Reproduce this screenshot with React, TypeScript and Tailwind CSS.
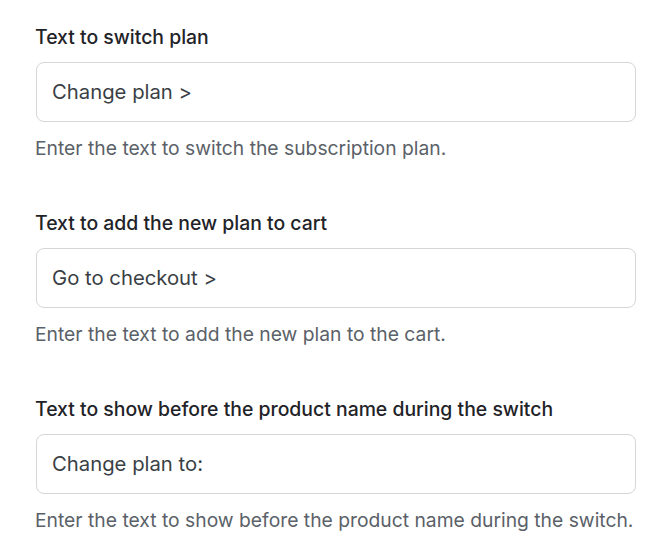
export default function App() {
  const fields = [
    {
      label: 'Text to switch plan',
      value: 'Change plan >',
      help: 'Enter the text to switch the subscription plan.',
    },
    {
      label: 'Text to add the new plan to cart',
      value: 'Go to checkout >',
      help: 'Enter the text to add the new plan to the cart.',
    },
    {
      label: 'Text to show before the product name during the switch',
      value: 'Change plan to:',
      help: 'Enter the text to show before the product name during the switch.',
    },
  ];

  return (
    <div className="min-h-screen bg-white pl-[35px] pr-[34px] pt-[26px] font-['Inter',sans-serif]">
      <div className="flex flex-col gap-[52px]">
        {fields.map((f) => (
          <div key={f.label} className="flex flex-col">
            <label className="text-[19.4px] leading-[22px] font-medium text-[#1f2328]">{f.label}</label>
            <div className="ml-[1px] mt-[14px] h-[60px] w-[600px] rounded-lg border border-[#d4d6d9] bg-white px-[15px] flex items-center">
              <input
                defaultValue={f.value}
                className="w-full bg-transparent text-[20.3px] text-[#3a3f45] outline-none"
              />
            </div>
            <p className="mt-[14px] whitespace-nowrap text-[19.3px] leading-[24px] text-[#5b6168]">{f.help}</p>
          </div>
        ))}
      </div>
    </div>
  );
}
